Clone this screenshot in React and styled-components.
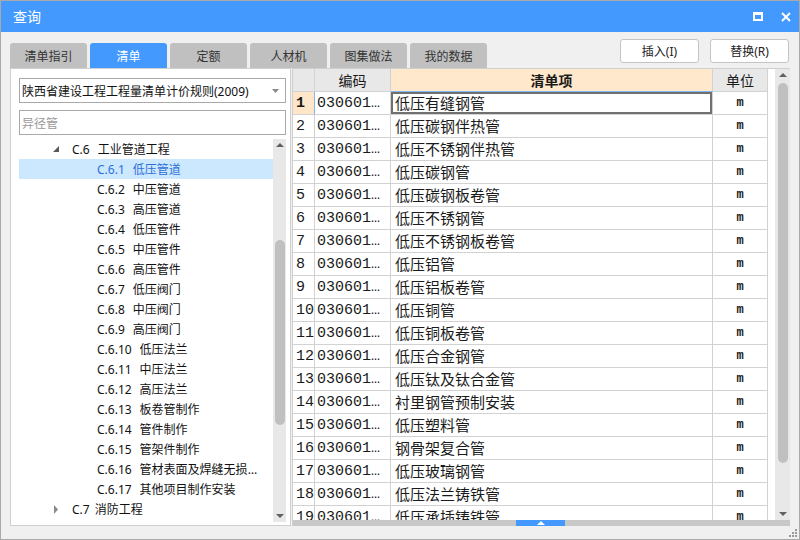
import React from 'react'
import styled, { createGlobalStyle } from 'styled-components'

const GlobalStyle = createGlobalStyle`
  html, body {
    margin: 0;
    padding: 0;
    background: #ffffff;
  }
  body {
    font-family: "Noto Sans", "Noto Sans CJK SC", sans-serif;
  }
  * { box-sizing: border-box; }
`

const UI_FONT = `"Noto Sans", "Noto Sans CJK SC", sans-serif`
const GRID_FONT = `"Liberation Mono", "Noto Sans CJK SC", monospace`

const Window = styled.div`
  width: 800px;
  height: 540px;
  border: 1px solid #a9a9a9;
  background: #f0f0f0;
  display: flex;
  flex-direction: column;
  overflow: hidden;
`
const TitleBar = styled.div`
  height: 31px;
  flex: none;
  background: #4499ff;
  display: flex;
  align-items: center;
  justify-content: space-between;
  padding: 0 8px 0 12px;
  color: #ffffff;
`
const TitleText = styled.span`
  font-family: ${UI_FONT};
  font-size: 14px;
  line-height: 20px;
`
const TitleActions = styled.div`
  display: flex;
  align-items: center;
  gap: 18px;
`
const TopBar = styled.div`
  height: 36px;
  flex: none;
  display: flex;
  justify-content: space-between;
  padding: 0 10px 0 9px;
`
const TabList = styled.div`
  display: flex;
  gap: 3px;
  margin-top: 11px;
`
const Tab = styled.div`
  width: 77px;
  height: 25px;
  border-radius: 3px 3px 0 0;
  background: ${p => (p.$active ? '#4499ff' : '#c0c0c0')};
  color: ${p => (p.$active ? '#ffffff' : '#333333')};
  font-family: ${UI_FONT};
  font-size: 12px;
  display: flex;
  align-items: center;
  justify-content: center;
`
const ButtonGroup = styled.div`
  display: flex;
  gap: 11px;
  margin-top: 7px;
  align-self: flex-start;
`
const ActionButton = styled.button`
  width: 79px;
  height: 24px;
  background: #ffffff;
  border: 1px solid #c4c4c4;
  border-radius: 3px;
  font-family: ${UI_FONT};
  font-size: 12px;
  color: #222222;
  padding: 0;
`
const Main = styled.div`
  height: 458px;
  flex: none;
  display: flex;
  gap: 1px;
  padding: 0 9px;
`
const LeftPanel = styled.div`
  width: 281px;
  flex: none;
  background: #ffffff;
  border: 1px solid #cfcfcf;
  padding: 9px 4px 3px 8px;
  display: flex;
  flex-direction: column;
`
const Select = styled.div`
  height: 25px;
  flex: none;
  border: 1px solid #a9a9a9;
  display: flex;
  align-items: center;
  justify-content: space-between;
  padding: 0 6px 0 2px;
  font-family: ${UI_FONT};
  font-size: 12px;
  color: #111111;
`
const SearchBox = styled.div`
  height: 25px;
  flex: none;
  margin-top: 7px;
  border: 1px solid #a9a9a9;
  display: flex;
  align-items: center;
  padding: 0 2px;
  font-family: ${UI_FONT};
  font-size: 12px;
  color: #9a9a9a;
`
const TreeArea = styled.div`
  flex: 1;
  min-height: 0;
  margin-top: 4px;
  display: flex;
`
const TreeList = styled.div`
  flex: 1;
  min-width: 0;
  overflow: hidden;
`
const TreeRow = styled.div`
  height: 20px;
  display: flex;
  align-items: center;
  padding-left: ${p => p.$indent}px;
  background: ${p => (p.$selected ? '#cce8ff' : 'transparent')};
  color: ${p => (p.$selected ? '#2f6fd6' : '#111111')};
  font-family: ${UI_FONT};
  font-size: 12px;
  white-space: nowrap;
`
const Twisty = styled.span`
  width: 19px;
  flex: none;
  display: flex;
  align-items: center;
`
const NodeCode = styled.span`
  flex: none;
`
const NodeName = styled.span`
  margin-left: ${p => p.$gap}px;
  overflow: hidden;
  text-overflow: ellipsis;
  max-width: ${p => p.$max}px;
`
const ScrollBar = styled.div`
  width: ${p => p.$width}px;
  flex: none;
  background: #e8e8e8;
  display: flex;
  flex-direction: column;
  align-items: center;
`
const ScrollArrow = styled.div`
  height: 12px;
  flex: none;
  display: flex;
  align-items: center;
  justify-content: center;
`
const ScrollTrack = styled.div`
  flex: 1;
  width: 100%;
  display: flex;
  justify-content: center;
`
const ScrollThumb = styled.div`
  width: 10px;
  border-radius: 5px;
  background: #c0c0c0;
`
const TablePanel = styled.div`
  flex: 1;
  min-width: 0;
  display: flex;
  flex-direction: column;
  background: #ffffff;
  border-top: 1px solid #cfcfcf;
  border-left: 1px solid #cfcfcf;
`
const GridArea = styled.div`
  flex: 1;
  min-height: 0;
  display: flex;
`
const Grid = styled.div`
  width: 475px;
  flex: none;
  overflow: hidden;
`
const Gutter = styled.div`
  width: 7px;
  flex: none;
`
const GridRow = styled.div`
  display: grid;
  grid-template-columns: 22px 76px 322px 55px;
  height: 23px;
`
const Cell = styled.div`
  border-right: 1px solid ${p => p.$rightColor || '#d2d2d2'};
  border-bottom: 1px solid ${p => p.$bottomColor || '#d2d2d2'};
  background: ${p => p.$bg || '#ffffff'};
  display: flex;
  align-items: center;
  justify-content: ${p => (p.$center ? 'center' : 'flex-start')};
  padding: 0 ${p => (p.$center ? 0 : 4)}px 0 ${p => p.$pad || 0}px;
  font-family: ${GRID_FONT};
  font-size: 15px;
  font-weight: ${p => (p.$bold ? 700 : 400)};
  color: #1a1a1a;
  white-space: nowrap;
  overflow: hidden;
  box-shadow: ${p => (p.$focus ? 'inset 0 0 0 2px #707070' : 'none')};
`
const CellText = styled.span`
  overflow: hidden;
  text-overflow: ellipsis;
`
const HeaderCell = styled(Cell)`
  font-family: ${UI_FONT};
  font-size: 14px;
`
const UnitText = styled.span`
  font-family: "Liberation Mono", monospace;
  font-size: 12px;
  font-weight: 700;
`
const Splitter = styled.div`
  height: 6px;
  flex: none;
  background: #c8c8c8;
  display: flex;
  padding-left: 223px;
`
const SplitHandle = styled.div`
  width: 49px;
  background: #4499ff;
  display: flex;
  align-items: center;
  justify-content: center;
`
const StatusStrip = styled.div`
  flex: 1;
  display: flex;
  justify-content: flex-end;
  align-items: flex-end;
  padding: 0 2px 2px 0;
`

const treeNodes = [
  { level: 1, code: 'C.6', name: '工业管道工程', open: true },
  { level: 2, code: 'C.6.1', name: '低压管道', selected: true },
  { level: 2, code: 'C.6.2', name: '中压管道' },
  { level: 2, code: 'C.6.3', name: '高压管道' },
  { level: 2, code: 'C.6.4', name: '低压管件' },
  { level: 2, code: 'C.6.5', name: '中压管件' },
  { level: 2, code: 'C.6.6', name: '高压管件' },
  { level: 2, code: 'C.6.7', name: '低压阀门' },
  { level: 2, code: 'C.6.8', name: '中压阀门' },
  { level: 2, code: 'C.6.9', name: '高压阀门' },
  { level: 2, code: 'C.6.10', name: '低压法兰' },
  { level: 2, code: 'C.6.11', name: '中压法兰' },
  { level: 2, code: 'C.6.12', name: '高压法兰' },
  { level: 2, code: 'C.6.13', name: '板卷管制作' },
  { level: 2, code: 'C.6.14', name: '管件制作' },
  { level: 2, code: 'C.6.15', name: '管架件制作' },
  { level: 2, code: 'C.6.16', name: '管材表面及焊缝无损探伤' },
  { level: 2, code: 'C.6.17', name: '其他项目制作安装' },
  { level: 1, code: 'C.7', name: '消防工程', open: false },
  { level: 1, code: 'C.8', name: '给排水、采暖、燃气工程', open: false },
]

const items = [
  '低压有缝钢管', '低压碳钢伴热管', '低压不锈钢伴热管', '低压碳钢管', '低压碳钢板卷管',
  '低压不锈钢管', '低压不锈钢板卷管', '低压铝管', '低压铝板卷管', '低压铜管',
  '低压铜板卷管', '低压合金钢管', '低压钛及钛合金管', '衬里钢管预制安装', '低压塑料管',
  '钢骨架复合管', '低压玻璃钢管', '低压法兰铸铁管', '低压承插铸铁管',
]

const tabs = ['清单指引', '清单', '定额', '人材机', '图集做法', '我的数据']

const Triangle = ({ dir = 'up', color = '#606060', w = 8, h = 4 }) => (
  <svg width={w} height={h} viewBox={`0 0 ${w} ${h}`}>
    {dir === 'up'
      ? <polygon points={`0,${h} ${w / 2},0 ${w},${h}`} fill={color} />
      : <polygon points={`0,0 ${w},0 ${w / 2},${h}`} fill={color} />}
  </svg>
)

const TreeNode = ({ node }) => (
  <TreeRow $indent={node.level === 1 ? 34 : 78} $selected={node.selected}>
    {node.level === 1 && (
      <Twisty>
        {node.open ? (
          <svg width="7" height="7" viewBox="0 0 7 7"><polygon points="6,0 6,6 0,6" fill="#595959" /></svg>
        ) : (
          <svg width="6" height="9" viewBox="0 0 6 9"><polygon points="1,0 5,4.5 1,9" fill="#8a8a8a" /></svg>
        )}
      </Twisty>
    )}
    <NodeCode>{node.code}</NodeCode>
    <NodeName $gap={node.code === 'C.6' ? 8 : node.level === 1 ? 5 : 8} $max={node.level === 2 ? 128 : 170}>
      {node.name}
    </NodeName>
  </TreeRow>
)

export default function App() {
  return (
    <>
      <GlobalStyle />
      <Window>
        <TitleBar>
          <TitleText>查询</TitleText>
          <TitleActions>
            <svg width="10" height="9" viewBox="0 0 10 9">
              <rect x="1" y="1" width="8" height="7" fill="none" stroke="#fff" strokeWidth="2" />
              <rect x="0" y="0" width="10" height="3" fill="#fff" />
            </svg>
            <svg width="10" height="10" viewBox="0 0 10 10">
              <path d="M1 1 L9 9 M9 1 L1 9" stroke="#fff" strokeWidth="2" />
            </svg>
          </TitleActions>
        </TitleBar>

        <TopBar>
          <TabList>
            {tabs.map(t => <Tab key={t} $active={t === '清单'}>{t}</Tab>)}
          </TabList>
          <ButtonGroup>
            <ActionButton>插入(I)</ActionButton>
            <ActionButton>替换(R)</ActionButton>
          </ButtonGroup>
        </TopBar>

        <Main>
          <LeftPanel>
            <Select>
              <span>陕西省建设工程工程量清单计价规则(2009)</span>
              <Triangle dir="down" color="#8a8a8a" w={7} h={4} />
            </Select>
            <SearchBox>异径管</SearchBox>
            <TreeArea>
              <TreeList>
                {treeNodes.map(n => <TreeNode key={n.code} node={n} />)}
              </TreeList>
              <ScrollBar $width={13}>
                <ScrollArrow><Triangle dir="up" /></ScrollArrow>
                <ScrollTrack>
                  <ScrollThumb style={{ marginTop: 89, height: 185 }} />
                </ScrollTrack>
                <ScrollArrow><Triangle dir="down" /></ScrollArrow>
              </ScrollBar>
            </TreeArea>
          </LeftPanel>

          <TablePanel>
            <GridArea>
              <Grid>
                <GridRow>
                  <HeaderCell $bg="#e8e8e8" />
                  <HeaderCell $bg="#e8e8e8" $center>编码</HeaderCell>
                  <HeaderCell $bg="#ffe8cc" $center $bold $bottomColor="#7fb6f5">清单项</HeaderCell>
                  <HeaderCell $bg="#e8e8e8" $center>单位</HeaderCell>
                </GridRow>
                {items.map((name, i) => {
                  const active = i === 0
                  return (
                    <GridRow key={name}>
                      <Cell
                        $pad={3}
                        $bold={active}
                        $bg={active ? '#ffe6c8' : '#ffffff'}
                        $rightColor={active ? '#7fb6f5' : undefined}
                      >
                        {i + 1}
                      </Cell>
                      <Cell $pad={2}>
                        <CellText>{`0306010${String(i + 1).padStart(2, '0')}`}</CellText>
                      </Cell>
                      <Cell $pad={4} $focus={active}>{name}</Cell>
                      <Cell $center><UnitText>m</UnitText></Cell>
                    </GridRow>
                  )
                })}
              </Grid>
              <Gutter />
              <ScrollBar $width={15}>
                <ScrollArrow><Triangle dir="up" /></ScrollArrow>
                <ScrollTrack>
                  <ScrollThumb style={{ marginTop: 2, height: 380 }} />
                </ScrollTrack>
                <ScrollArrow><Triangle dir="down" /></ScrollArrow>
              </ScrollBar>
            </GridArea>
            <Splitter>
              <SplitHandle><Triangle dir="up" color="#ffffff" w={8} h={4} /></SplitHandle>
            </Splitter>
          </TablePanel>
        </Main>

        <StatusStrip>
          <svg width="8" height="8" viewBox="0 0 8 8" fill="#9a9a9a">
            <rect x="6" y="0" width="2" height="2" />
            <rect x="3" y="3" width="2" height="2" />
            <rect x="6" y="3" width="2" height="2" />
            <rect x="0" y="6" width="2" height="2" />
            <rect x="3" y="6" width="2" height="2" />
            <rect x="6" y="6" width="2" height="2" />
          </svg>
        </StatusStrip>
      </Window>
    </>
  )
}
